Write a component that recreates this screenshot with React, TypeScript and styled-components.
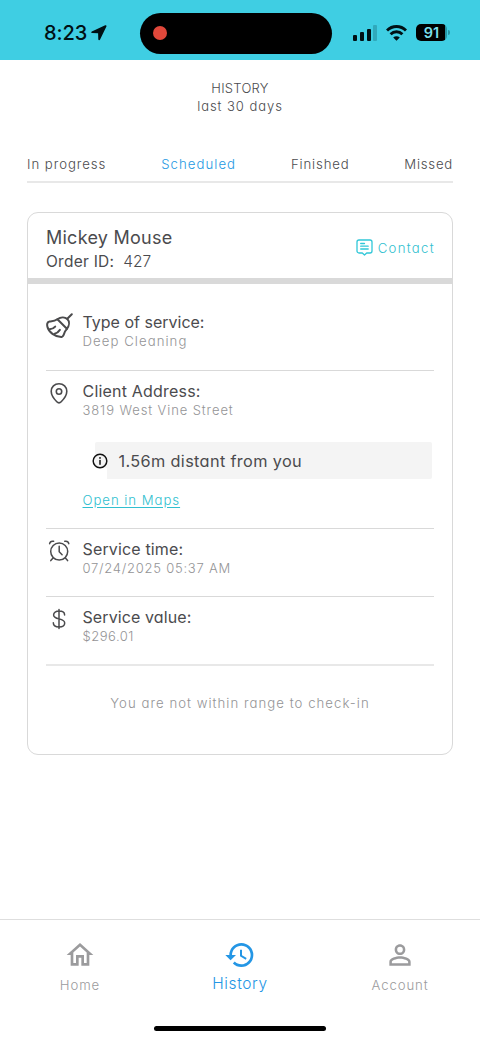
import React from "react";
import styled, { createGlobalStyle } from "styled-components";
import { MdHistory, MdOutlineHome, MdPersonOutline } from "react-icons/md";

const GlobalStyle = createGlobalStyle`
  * { box-sizing: border-box; }
  body { margin: 0; background: #fff; font-family: Inter, "Liberation Sans", sans-serif; font-feature-settings: "cv11"; }
  svg { display: block; flex: none; }
`;

const Screen = styled.div`
  width: 480px;
  height: 1040px;
  display: flex;
  flex-direction: column;
  background: #fff;
  overflow: hidden;
`;

const StatusBar = styled.header`
  height: 60px;
  flex: none;
  display: grid;
  grid-template-columns: 140px 192px 1fr;
  align-items: center;
  padding-top: 6px;
  background: #3fcee3;
`;

const Clock = styled.div`
  display: flex;
  align-items: center;
  gap: 4px;
  padding-left: 44px;
`;

const Island = styled.div`
  height: 41px;
  border-radius: 21px;
  background: #000;
  display: flex;
  align-items: center;
  padding-left: 13.4px;
`;

const RecordDot = styled.span`
  width: 14px;
  height: 14px;
  border-radius: 50%;
  background: #e0483b;
`;

const Indicators = styled.div`
  display: flex;
  align-items: center;
  padding-left: 21px;
  gap: 9px;
`;

const Battery = styled.div`
  display: flex;
  align-items: center;
  gap: 1px;
  margin-top: -2px;
`;

const BatteryBody = styled.div`
  width: 31px;
  height: 17px;
  border-radius: 5px;
  background: linear-gradient(90deg, #000 92%, #2794a3 92%);
  display: flex;
  align-items: center;
  justify-content: center;
`;

const BatteryTip = styled.span`
  width: 2px;
  height: 5px;
  border-radius: 0 2px 2px 0;
  background: #2794a3;
`;

const Text = styled.span<{ $size: number; $line?: number; $spacing?: number; $color?: string; $weight?: number }>`
  display: block;
  white-space: nowrap;
  font-size: ${(p) => p.$size}px;
  line-height: ${(p) => p.$line ?? 20}px;
  letter-spacing: ${(p) => p.$spacing ?? 0}px;
  color: ${(p) => p.$color ?? "#4b4b4e"};
  font-weight: ${(p) => p.$weight ?? 300};
`;

const Heading = styled.div`
  display: flex;
  flex-direction: column;
  align-items: center;
  padding-top: 19px;
`;

const Tabs = styled.nav`
  margin: 39px 27px 0;
  height: 29px;
  display: flex;
  justify-content: space-between;
  border-bottom: 2px solid #e8e8e8;
`;

const Card = styled.section`
  margin: 29px 27px 0;
  height: 543px;
  border: 1px solid #d9d9d9;
  border-radius: 11px;
`;

const CardHeader = styled.div`
  height: 71px;
  padding: 13px 17px 0 18px;
  display: flex;
  justify-content: space-between;
  border-bottom: 6px solid #d9d9d9;
`;

const OrderLine = styled.div`
  display: flex;
  gap: 9px;
`;

const Contact = styled.div`
  height: 43px;
  display: flex;
  align-items: center;
  gap: 5px;
`;

const Details = styled.div`
  padding: 18px 18px 0;
`;

const Row = styled.div<{ $height: number; $line?: number }>`
  height: ${(p) => p.$height}px;
  padding-top: 10px;
  display: flex;
  border-bottom: ${(p) => p.$line ?? 1}px solid ${(p) => (p.$line ? "#e8e8e8" : "#d9d9d9")};
`;

const IconSlot = styled.div<{ $drop?: number }>`
  width: 36.5px;
  flex: none;
  height: 24px;
  margin-top: ${(p) => p.$drop ?? 0}px;
  display: flex;
  align-items: center;
`;

const RowBody = styled.div`
  flex: 1;
`;

const Distance = styled.div`
  margin: 22px 2px 0 12px;
  height: 37px;
  display: flex;
  align-items: center;
  gap: 10px;
  background: linear-gradient(#f4f4f4, #f4f4f4) 12px 0 no-repeat, linear-gradient(#f4f4f4, #f4f4f4) 0 0 / 12px 26px no-repeat;
  border-radius: 2px;
`;

const InfoIcon = styled.span`
  margin-left: -4px;
`;

const MapLink = styled.a`
  display: block;
  margin-top: 11px;
  text-decoration: underline;
  text-decoration-color: #31bfd0;
  text-underline-offset: 2px;
`;

const Notice = styled.div`
  padding-top: 27px;
  display: flex;
  justify-content: center;
`;

const BottomNav = styled.nav`
  margin-top: auto;
  height: 107px;
  flex: none;
  border-top: 1px solid #dedede;
  display: grid;
  grid-template-columns: repeat(3, 160px);
`;

const NavItem = styled.div<{ $active?: boolean }>`
  display: flex;
  flex-direction: column;
  align-items: center;
  gap: ${(p) => (p.$active ? 3 : 4)}px;
  padding-top: 19px;
  color: ${(p) => (p.$active ? "#2496e5" : "#9b9b9d")};
`;

const HomeBar = styled.div`
  width: 172px;
  height: 5px;
  margin: 0 auto 9px;
  border-radius: 3px;
  background: #000;
  flex: none;
`;

const stroke = { fill: "none", stroke: "#4b4b4d", strokeLinecap: "round" as const, strokeLinejoin: "round" as const };

const Broom = () => (
  <svg width="28" height="26" viewBox="0 0 28 26" {...stroke} strokeWidth="2">
    <path d="M25.800 1.200 21.300 5.800" />
    <path d="M11.400 6.300c3.200-2.300 7.300-2.700 9.900-.3 2.500 2.500 2 6.700-.4 9.800Z" />
    <path d="M11.400 6.300C8.800 8.300 6.300 8.300 3.500 8.600 1.200 9 .8 11.300 1.400 13.700c1.200 5.300 7.500 10.500 14.400 10.200 1.700-.3 2-1.900 2.500-3.700.4-1.500 1.400-3 2.600-4.400" />
    <path d="M3.600 16.300c2.500-.1 4.100-1 5.600-2.700M8.600 20.800c2.400-.5 4-2 5.300-3.900" />
  </svg>
);

const Pin = () => (
  <svg width="26" height="24" viewBox="0 0 26 24" {...stroke} strokeWidth="1.600">
    <path d="M13 2.700c-4.500 0-7.800 3.300-7.800 7.600 0 4 3 7.900 5.600 10.500 1.400 1.400 3 1.400 4.400 0 2.600-2.600 5.600-6.500 5.600-10.500 0-4.300-3.300-7.600-7.800-7.600Z" />
    <circle cx="13" cy="10.500" r="2.700" />
  </svg>
);

const Alarm = () => (
  <svg width="26" height="24" viewBox="0 0 26 24" {...stroke} strokeWidth="1.500">
    <circle cx="13.200" cy="12.600" r="8.500" />
    <path d="M13.200 7.300v5.500l2.900 2.900M3.600 4.700C4 2.800 5.600 1.900 7.600 2.300M22.800 4.700c-.4-1.900-2-2.800-4-2.400M6.800 19.300l-2 2.300M19.600 19.300l2 2.300" />
  </svg>
);

const Info = () => (
  <svg width="18" height="18" viewBox="0 0 18 18" fill="none" stroke="#111" strokeWidth="1.500" strokeLinecap="round">
    <circle cx="9" cy="9" r="6.800" />
    <path d="M9 8.500v3.700" />
    <circle cx="9" cy="5.900" r=".9" fill="#111" stroke="none" />
  </svg>
);

const Dollar = () => (
  <svg width="26" height="24" viewBox="0 0 26 24" {...stroke} strokeWidth="1.500">
    <path d="M13 2.500v19M18.600 8c0-2.500-2.300-3.900-5.500-3.900S7.600 5.500 7.600 7.900c0 5.500 11.100 2.400 11.100 8.100 0 2.700-2.500 4-5.600 4s-5.800-1.500-5.800-4.200" />
  </svg>
);

const Message = () => (
  <svg width="17" height="17" viewBox="0 0 17 17" fill="none" stroke="#31c7d8" strokeWidth="1.300" strokeLinejoin="round" strokeLinecap="round">
    <path d="M3 1h11a2 2 0 0 1 2 2v9a2 2 0 0 1-2 2h-3.300L8.500 16l-2.200-2H3a2 2 0 0 1-2-2V3a2 2 0 0 1 2-2ZM4.700 4.500h3.800M4.700 7.200h7.500M4.700 10h7.500" />
  </svg>
);

const App = () => (
  <Screen>
    <GlobalStyle />
    <StatusBar>
      <Clock>
        <Text $size={20} $weight={500} $color="#001014" $spacing={-0.1}>8:23</Text>
        <svg width="16" height="16" viewBox="0 0 16 16">
          <path d="M14.200.3.800 6.400c-1 .5-.8 1.700.3 1.700l6 .2.200 6c0 1.200 1.300 1.400 1.800.3l6.300-13.200c.4-.900-.3-1.500-1.200-1.100Z" fill="#001014" />
        </svg>
      </Clock>
      <Island><RecordDot /></Island>
      <Indicators>
        <svg width="24" height="16" viewBox="0 0 24 16" fill="#001014">
          <rect x="0" y="10" width="4" height="6" rx="1" />
          <rect x="7" y="7" width="4" height="9" rx="1" />
          <rect x="14" y="4" width="4" height="12" rx="1" />
          <rect x="20" y="0" width="4" height="16" rx="1" fill="#30a9bb" />
        </svg>
        <svg width="21" height="16" viewBox="0 0 21 16" fill="none" stroke="#001014" strokeWidth="2.900">
          <path d="M1 5.500c5.300-5.300 13.700-5.300 19 0M4.600 9.200c3.300-3.300 8.500-3.300 11.800 0" />
          <path d="m7.200 12.500 3.300 3.300 3.300-3.300c-1.900-1.800-4.700-1.800-6.600 0Z" fill="#001014" stroke="none" />
        </svg>
        <Battery>
          <BatteryBody><Text $size={14.5} $weight={600} $line={17} $color="#7adfe9">91</Text></BatteryBody>
          <BatteryTip />
        </Battery>
      </Indicators>
    </StatusBar>

    <Heading>
      <Text $size={13} $line={18} $spacing={0.25}>HISTORY</Text>
      <Text $size={13} $line={18} $spacing={0.95}>last 30 days</Text>
    </Heading>

    <Tabs>
      <Text $size={13.2} $line={21} $spacing={0.95}>In progress</Text>
      <Text $size={13.2} $line={21} $spacing={1.05} $color="#2599e3">Scheduled</Text>
      <Text $size={13.2} $line={21} $spacing={0.85}>Finished</Text>
      <Text $size={13.2} $line={21} $spacing={0.75}>Missed</Text>
    </Tabs>

    <Card>
      <CardHeader>
        <div>
          <Text $size={18} $line={24} $weight={400} $spacing={0.25}>Mickey Mouse</Text>
          <OrderLine>
            <Text $size={15.5} $line={24} $weight={400} $spacing={0.25}>Order ID:</Text>
            <Text $size={15.5} $line={24}>427</Text>
          </OrderLine>
        </div>
        <Contact>
          <Message />
          <Text $size={13.2} $spacing={1.3} $color="#31bfd0">Contact</Text>
        </Contact>
      </CardHeader>

      <Details>
        <Row $height={69}>
          <IconSlot $drop={2}><Broom /></IconSlot>
          <RowBody>
            <Text $size={16} $weight={400}>Type of service:</Text>
            <Text $size={13.2} $line={19} $spacing={1.05} $color="#949496">Deep Cleaning</Text>
          </RowBody>
        </Row>
        <Row $height={158}>
          <IconSlot><Pin /></IconSlot>
          <RowBody>
            <Text $size={16} $weight={400} $spacing={0.2}>Client Address:</Text>
            <Text $size={13} $line={19} $spacing={0.9} $color="#949496">3819 West Vine Street</Text>
            <Distance>
              <InfoIcon><Info /></InfoIcon>
              <Text $size={16.3} $weight={400} $spacing={0.35}>1.56m distant from you</Text>
            </Distance>
            <MapLink><Text $size={13.2} $spacing={0.95} $color="#31bfd0">Open in Maps</Text></MapLink>
          </RowBody>
        </Row>
        <Row $height={68}>
          <IconSlot><Alarm /></IconSlot>
          <RowBody>
            <Text $size={16} $weight={400} $spacing={0.15}>Service time:</Text>
            <Text $size={13} $line={19} $spacing={0.75} $color="#949496">07/24/2025 05:37 AM</Text>
          </RowBody>
        </Row>
        <Row $height={69} $line={2}>
          <IconSlot><Dollar /></IconSlot>
          <RowBody>
            <Text $size={16} $weight={400} $spacing={0.1}>Service value:</Text>
            <Text $size={13} $line={19} $spacing={0.5} $color="#949496">$296.01</Text>
          </RowBody>
        </Row>
        <Notice><Text $size={13.2} $spacing={1.03} $color="#949496">You are not within range to check-in</Text></Notice>
      </Details>
    </Card>

    <BottomNav>
      <NavItem>
        <MdOutlineHome size={32} />
        <Text $size={13.2} $spacing={0.9} $color="inherit">Home</Text>
      </NavItem>
      <NavItem $active>
        <MdHistory size={32} />
        <Text $size={15.5} $spacing={0.6} $color="inherit">History</Text>
      </NavItem>
      <NavItem>
        <MdPersonOutline size={32} />
        <Text $size={13.2} $spacing={0.9} $color="inherit">Account</Text>
      </NavItem>
    </BottomNav>
    <HomeBar />
  </Screen>
);

export default App;
